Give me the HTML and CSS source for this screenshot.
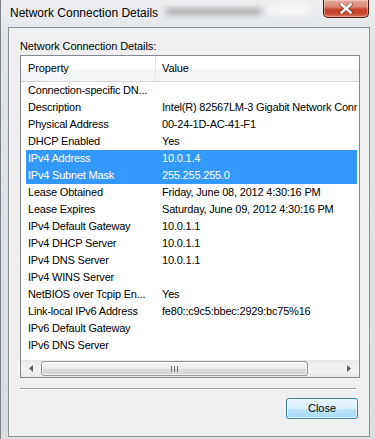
FILE: index.html
```html
<!DOCTYPE html>
<html lang="en">
<head>
	<meta charset="UTF-8">
	<title>Network Connection Details</title>
	<link rel="stylesheet" href="styles.css">
</head>
<body>
	<div class="window">
		<div class="titlebar">
			<span class="title">Network Connection Details</span>
			<span class="smear"></span>
			<span class="smear smear2"></span>
			<a class="closex" href="javascript:;">
				<svg width="14" height="11" viewBox="0 0 14 11">
					<path d="M2 1.5 L12 9.5 M12 1.5 L2 9.5" stroke="#4a1a12" stroke-width="3.6" stroke-linecap="square" opacity=".45"/>
					<path d="M2.5 1.5 L11.5 9.5 M11.5 1.5 L2.5 9.5" stroke="#fff" stroke-width="2.4" stroke-linecap="square"/>
				</svg>
			</a>
		</div>
		<div class="client">
			<div class="label">Network Connection Details:</div>
			<div class="listbox">
				<div class="head">
					<div class="hcell h1">Property</div>
					<div class="hcell h2">Value</div>
				</div>
				<ul class="rows">
					<li><span class="c1">Connection-specific DN...</span><span class="c2"></span></li>
					<li><span class="c1">Description</span><span class="c2">Intel(R) 82567LM-3 Gigabit Network Connection</span></li>
					<li><span class="c1">Physical Address</span><span class="c2">00-24-1D-AC-41-F1</span></li>
					<li><span class="c1">DHCP Enabled</span><span class="c2">Yes</span></li>
					<li class="sel"><span class="c1">IPv4 Address</span><span class="c2">10.0.1.4</span></li>
					<li class="sel"><span class="c1">IPv4 Subnet Mask</span><span class="c2">255.255.255.0</span></li>
					<li><span class="c1">Lease Obtained</span><span class="c2">Friday, June 08, 2012 4:30:16 PM</span></li>
					<li><span class="c1">Lease Expires</span><span class="c2">Saturday, June 09, 2012 4:30:16 PM</span></li>
					<li><span class="c1">IPv4 Default Gateway</span><span class="c2">10.0.1.1</span></li>
					<li><span class="c1">IPv4 DHCP Server</span><span class="c2">10.0.1.1</span></li>
					<li><span class="c1">IPv4 DNS Server</span><span class="c2">10.0.1.1</span></li>
					<li><span class="c1">IPv4 WINS Server</span><span class="c2"></span></li>
					<li><span class="c1">NetBIOS over Tcpip En...</span><span class="c2">Yes</span></li>
					<li><span class="c1">Link-local IPv6 Address</span><span class="c2">fe80::c9c5:bbec:2929:bc75%16</span></li>
					<li><span class="c1">IPv6 Default Gateway</span><span class="c2"></span></li>
					<li><span class="c1">IPv6 DNS Server</span><span class="c2"></span></li>
				</ul>
				<div class="hscroll">
					<span class="arrow">
						<svg width="4" height="7" viewBox="0 0 4 7"><path d="M4 0 L0 3.5 L4 7 Z" fill="#606060"/></svg>
					</span>
					<div class="track">
						<div class="thumb"><span class="grip"></span></div>
					</div>
					<span class="arrow">
						<svg width="4" height="7" viewBox="0 0 4 7"><path d="M0 0 L4 3.5 L0 7 Z" fill="#606060"/></svg>
					</span>
				</div>
			</div>
			<div class="sep"></div>
			<div class="buttons">
				<a class="btn" href="javascript:;">Close</a>
			</div>
		</div>
	</div>
</body>
</html>
```

FILE: styles.css
```css
*{ margin: 0; padding: 0; list-style: none; text-decoration: none; box-sizing: border-box; }
body{ width: 375px; height: 439px; overflow: hidden; font-family: "Liberation Sans", Arial, sans-serif; color: #000; background: #d9dde2; }

.window{ width: 375px; height: 439px; display: flex; flex-direction: column; border-left: 1px solid #7c8187; background: linear-gradient(#eceef0 0, #e2e5e8 40px, #dadee3 100%); }

.titlebar{ height: 27px; display: flex; align-items: flex-start; position: relative; }
.title{ font-size: 12px; line-height: 14px; margin: 6px 0 0 9px; }
.smear{ position: absolute; left: 165px; top: 9px; width: 95px; height: 5px; background: #4c4c4c; filter: blur(3px); opacity: .55; }
.smear2{ left: 268px; top: 6px; width: 40px; height: 8px; background: #fff; opacity: .7; }
.closex{ margin-left: auto; margin-right: 6px; width: 46px; height: 18px; border: 1px solid #5a1a12; border-top: none; border-radius: 0 0 5px 5px; background: linear-gradient(#e8a899 0, #d98874 40%, #c2432c 55%, #c6482f 80%, #d77a5f 100%); box-shadow: inset 0 0 0 1px rgba(255,255,255,.35); display: flex; align-items: center; justify-content: center; }

.client{ flex: 1; margin: 0 5px 2px 7px; border: 1px solid #8a9096; background: #f0f0f0; padding: 10px 9px 0 11px; display: flex; flex-direction: column; }
.label{ font-size: 11px; line-height: 17px; letter-spacing: -.1px; }

.listbox{ height: 323px; border: 1px solid #828790; background: #fff; display: flex; flex-direction: column; }
.head{ height: 26px; display: flex; border-bottom: 1px solid #d5d5d5; background: linear-gradient(#fff 0, #fff 50%, #f6f7f9 51%, #f3f4f6 100%); font-size: 11px; letter-spacing: -.1px; }
.hcell{ line-height: 25px; }
.h1{ width: 135px; padding-left: 7px; border-right: 1px solid #e3e8ee; }
.h2{ padding-left: 6px; }

.rows{ flex: 1; padding: 0 2px 0 5px; font-size: 11px; letter-spacing: -.2px; }
.rows li{ height: 17px; line-height: 17px; display: flex; white-space: nowrap; overflow: hidden; }
.rows .c1{ width: 134px; flex-shrink: 0; padding-left: 2px; overflow: hidden; }
.rows .c2{ padding-left: 2px; }
.rows li.sel{ background: #3399ff; color: #fff; }

.hscroll{ height: 17px; display: flex; align-items: center; background: linear-gradient(#e7e7e7, #f1f1f1 30%, #f1f1f1 70%, #e7e7e7); }
.arrow{ width: 20px; height: 17px; display: flex; align-items: center; justify-content: center; }
.track{ flex: 1; display: flex; align-items: center; padding-right: 29px; }
.thumb{ width: 267px; height: 15px; border: 1px solid #959595; border-radius: 3px; background: linear-gradient(#f5f5f5 0, #ececec 50%, #dcdcdc 51%, #d3d3d3 100%); box-shadow: inset 0 0 0 1px rgba(255,255,255,.7); display: flex; align-items: center; justify-content: center; }
.grip{ width: 7px; height: 6px; background: repeating-linear-gradient(90deg, #6d6d6d 0, #6d6d6d 1px, transparent 1px, transparent 3px); }

.sep{ height: 2px; margin: 10px 4px 0 0; border-top: 1px solid #a0a0a0; border-bottom: 1px solid #fff; }

.buttons{ display: flex; justify-content: flex-end; padding: 8px 2px 0 0; }
.btn{ width: 72px; height: 21px; border: 1px solid #3c7fb1; border-radius: 3px; background: linear-gradient(#eaf6fd 0, #d9f0fc 50%, #bee6fd 51%, #a7d9f5 100%); box-shadow: inset 0 0 0 1px rgba(255,255,255,.6); font-size: 11px; line-height: 19px; text-align: center; color: #000; }
```
